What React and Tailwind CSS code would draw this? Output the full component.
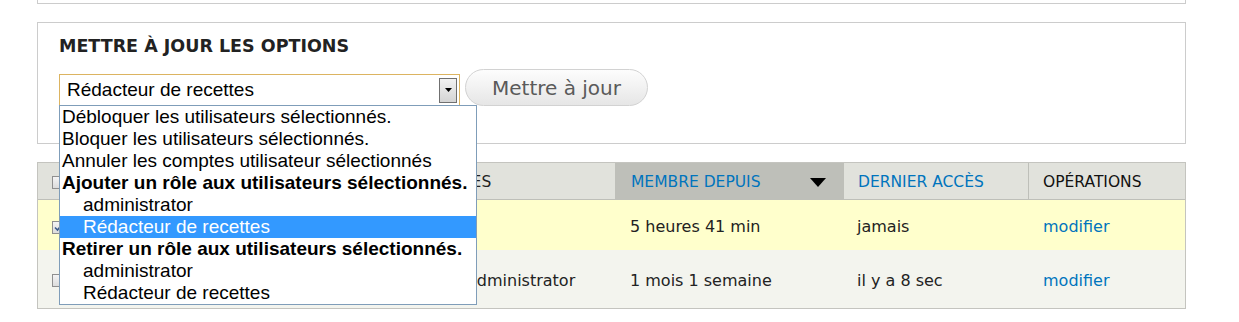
const options = [
  { label: 'Débloquer les utilisateurs sélectionnés.' },
  { label: 'Bloquer les utilisateurs sélectionnés.' },
  { label: 'Annuler les comptes utilisateur sélectionnés' },
  { label: 'Ajouter un rôle aux utilisateurs sélectionnés.', group: true },
  { label: 'administrator', indent: true },
  { label: 'Rédacteur de recettes', indent: true, selected: true },
  { label: 'Retirer un rôle aux utilisateurs sélectionnés.', group: true },
  { label: 'administrator', indent: true },
  { label: 'Rédacteur de recettes', indent: true },
]

function Checkbox({ checked }) {
  return (
    <span className="w-[13px] h-[13px] border border-[#8f8f8f] bg-gradient-to-b from-[#f4f4f4] to-[#dcdcdc] flex items-center justify-center">
      {checked && (
        <svg width="9" height="9" viewBox="0 0 9 9">
          <path d="M1 4.5 L3.5 7 L8 1.5" fill="none" stroke="#3a5a8c" strokeWidth="1.6" />
        </svg>
      )}
    </span>
  )
}

function SelectBox() {
  return (
    <div className="relative mt-[5px] z-10">
      <div className="w-[401px] h-[32px] border border-[#dcb461] bg-white flex items-center" style={{ fontFamily: '"Liberation Sans", Arial, sans-serif' }}>
        <span className="pl-[7px] pb-[2px] text-[19px] text-black leading-none">Rédacteur de recettes</span>
        <span className="ml-auto mr-[2px] w-[18px] h-[25px] border border-[#707070] bg-gradient-to-b from-[#f2f2f2] to-[#d4d4d4] flex items-center justify-center">
          <svg width="7" height="4" viewBox="0 0 7 4"><path d="M0 0 H7 L3.5 4 Z" fill="#000" /></svg>
        </span>
      </div>
      <ul className="absolute left-0 top-[31px] w-[418px] border border-[#7f9db9] bg-white text-[19px] leading-[22px] text-black"
        style={{ fontFamily: '"Liberation Sans", Arial, sans-serif' }}>
        {options.map((o, i) => (
          <li key={i}
            className={`h-[22px] whitespace-nowrap ${o.indent ? 'pl-[23px]' : 'pl-[2px]'} ${o.group ? 'font-bold' : ''} ${o.selected ? 'bg-[#3399ff] text-white' : ''}`}>
            {o.label}
          </li>
        ))}
      </ul>
    </div>
  )
}

const cols = 'grid grid-cols-[38px_210px_140px_189px_229px_184px_1fr]'

export default function App() {
  return (
    <div className="bg-white w-[1239px] h-[322px] overflow-hidden text-[#222]" style={{ fontFamily: '"DejaVu Sans", "Lucida Grande", sans-serif' }}>
      <div className="ml-[37px] w-[1149px]">
        <div className="h-[4px] border-x border-b border-[#cccccc]" />

        <div className="mt-[18px] border border-[#cccccc] pl-[21px] pt-[12px] pb-[37px]">
          <h2 className="text-[17.5px] leading-[22px] font-bold text-[#222]">METTRE À JOUR LES OPTIONS</h2>
          <div className="mt-[12px] flex items-start gap-[5px]">
            <SelectBox />
            <button className="h-[37px] w-[183px] rounded-full border border-[#d2d2d2] bg-gradient-to-b from-[#fdfdfd] to-[#e6e6e6] text-[20px] text-[#5a5a5a]">
              Mettre à jour
            </button>
          </div>
        </div>

        <div className="mt-[18px] border border-[#c4c4bf]">
          <div className={`${cols} h-[37px] bg-[#e1e2dc] border-b border-[#bebfb9] text-[15.5px] items-stretch`}>
            <div className="flex items-center pl-[14px] pt-[2px]"><Checkbox /></div>
            <div />
            <div />
            <div className="flex items-center pl-[14px] pt-[3px]">RÔLES</div>
            <div className="flex items-center pl-[16px] pr-[18px] pt-[3px] bg-[#bebfb9] text-[#0074bd]">
              <span>MEMBRE DEPUIS</span>
              <svg className="ml-auto" width="16" height="9" viewBox="0 0 16 9"><path d="M0 0 H16 L8 9 Z" fill="#000" /></svg>
            </div>
            <div className="flex items-center pl-[14px] pt-[3px] text-[#0074bd]">DERNIER ACCÈS</div>
            <div className="flex items-center pl-[14px] pt-[3px] border-l border-[#bebfb9] text-[#111]">OPÉRATIONS</div>
          </div>

          <div className={`${cols} h-[50px] pt-[3px] bg-[#ffffcc] text-[16px] items-center`}>
            <div className="pl-[14px] pt-[2px]"><Checkbox checked /></div>
            <div />
            <div />
            <div />
            <div className="pl-[15px]">5 heures 41 min</div>
            <div className="pl-[13px]">jamais</div>
            <div className="pl-[15px] text-[#0074bd]">modifier</div>
          </div>

          <div className={`${cols} h-[58px] pt-[3px] bg-[#f3f4ee] text-[16px] items-center`}>
            <div className="pl-[14px]"><Checkbox /></div>
            <div />
            <div />
            <div className="pl-[41px]">administrator</div>
            <div className="pl-[15px]">1 mois 1 semaine</div>
            <div className="pl-[13px]">il y a 8 sec</div>
            <div className="pl-[15px] text-[#0074bd]">modifier</div>
          </div>
        </div>
      </div>
    </div>
  )
}
